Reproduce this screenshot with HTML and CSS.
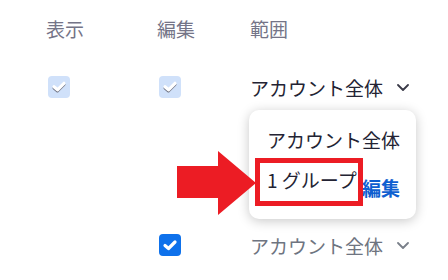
FILE: index.html
```html
<!DOCTYPE html>
<html lang="ja">
<head>
<meta charset="utf-8">
<link rel="stylesheet" href="styles.css">
</head>
<body>
<div class="table">
  <div class="row head">
    <div class="c1">表示</div>
    <div class="c2">編集</div>
    <div class="c3">範囲</div>
  </div>
  <div class="row r1">
    <div class="c1"><span class="cb light"><svg viewBox="0 0 22 22" width="22" height="22"><polyline points="6,12 9.5,15 16,8.5" class="ck shade"/><polyline points="6,10.8 9.5,13.8 16,7.3" class="ck"/></svg></span></div>
    <div class="c2"><span class="cb light"><svg viewBox="0 0 22 22" width="22" height="22"><polyline points="6,12 9.5,15 16,8.5" class="ck shade"/><polyline points="6,10.8 9.5,13.8 16,7.3" class="ck"/></svg></span></div>
    <div class="c3 scope">アカウント全体<svg class="chev" viewBox="0 0 12 7" width="12" height="7"><polyline points="1,1 6,6 11,1"/></svg></div>
  </div>
  <div class="row r2">
    <div class="c1"></div>
    <div class="c2"></div>
    <div class="c3"><a class="edit">編集</a></div>
  </div>
  <div class="row r3">
    <div class="c1"></div>
    <div class="c2"><span class="cb blue"><svg viewBox="0 0 22 22" width="22" height="22"><polyline points="6,11.5 9.5,14.5 16,8" class="ck"/></svg></span></div>
    <div class="c3 scope muted">アカウント全体<svg class="chev" viewBox="0 0 12 7" width="12" height="7"><polyline points="1,1 6,6 11,1"/></svg></div>
  </div>

  <div class="menu">
    <div class="item">アカウント全体</div>
    <div class="item">1 グループ</div>
  </div>
  <div class="highlight"></div>
  <svg class="arrow" viewBox="0 0 79 64" width="79" height="64"><polygon points="0,15 41,15 41,0 79,32 41,64 41,47 0,47"/></svg>
</div>
</body>
</html>
```
FILE: styles.css
```css
html, body {
  margin: 0;
  padding: 0;
  background: #ffffff;
}
body {
  font-family: "Noto Sans CJK JP", "Noto Sans", sans-serif;
  font-size: 19px;
  color: #232333;
  width: 448px;
  height: 280px;
  overflow: hidden;
}
.table {
  position: relative;
  padding-left: 46px;
}
.row {
  display: grid;
  grid-template-columns: 111px 93px 1fr;
  align-items: center;
}
.head {
  height: 56px;
  color: #747487;
}
.r1 {
  height: 62px;
}
.r2 {
  margin-top: 40px;
  height: 58px;
  position: relative;
  z-index: 3;
}
.r3 {
  height: 58px;
}
.r1 .c1, .r1 .c2, .r3 .c2 {
  padding-left: 2px;
}
.cb {
  display: block;
  width: 22px;
  height: 22px;
  border-radius: 4px;
}
.cb svg {
  display: block;
}
.cb.light {
  background: #d0e1fa;
}
.cb.blue {
  background: #0e71eb;
}
.ck {
  fill: none;
  stroke: #ffffff;
  stroke-width: 3.2;
  stroke-linecap: round;
  stroke-linejoin: round;
}
.ck.shade {
  stroke: #6f7282;
  stroke-width: 3;
}
.scope {
  display: flex;
  align-items: center;
}
.scope.muted {
  color: #6e7480;
}
.chev {
  margin-left: 14px;
  fill: none;
  stroke: #3a3a48;
  stroke-width: 1.8;
  stroke-linecap: round;
  stroke-linejoin: round;
}
.muted .chev {
  stroke: #7a808a;
}
.edit {
  display: inline-block;
  margin-left: 112px;
  color: #0e5fd0;
  font-weight: 700;
}
.menu {
  position: absolute;
  left: 249px;
  top: 110px;
  width: 167px;
  height: 109px;
  box-sizing: border-box;
  padding: 10px 0 19px 18px;
  background: #ffffff;
  border-radius: 10px;
  box-shadow: 0 2px 12px rgba(0, 0, 0, 0.22);
  z-index: 2;
  display: flex;
  flex-direction: column;
}
.item {
  height: 40px;
  line-height: 40px;
  white-space: nowrap;
}
.highlight {
  position: absolute;
  left: 255px;
  top: 158px;
  width: 108px;
  height: 48px;
  box-sizing: border-box;
  border: 5px solid #ec1c24;
  z-index: 4;
}
.arrow {
  position: absolute;
  left: 177px;
  top: 151px;
  z-index: 4;
  fill: #ec1c24;
}
```
